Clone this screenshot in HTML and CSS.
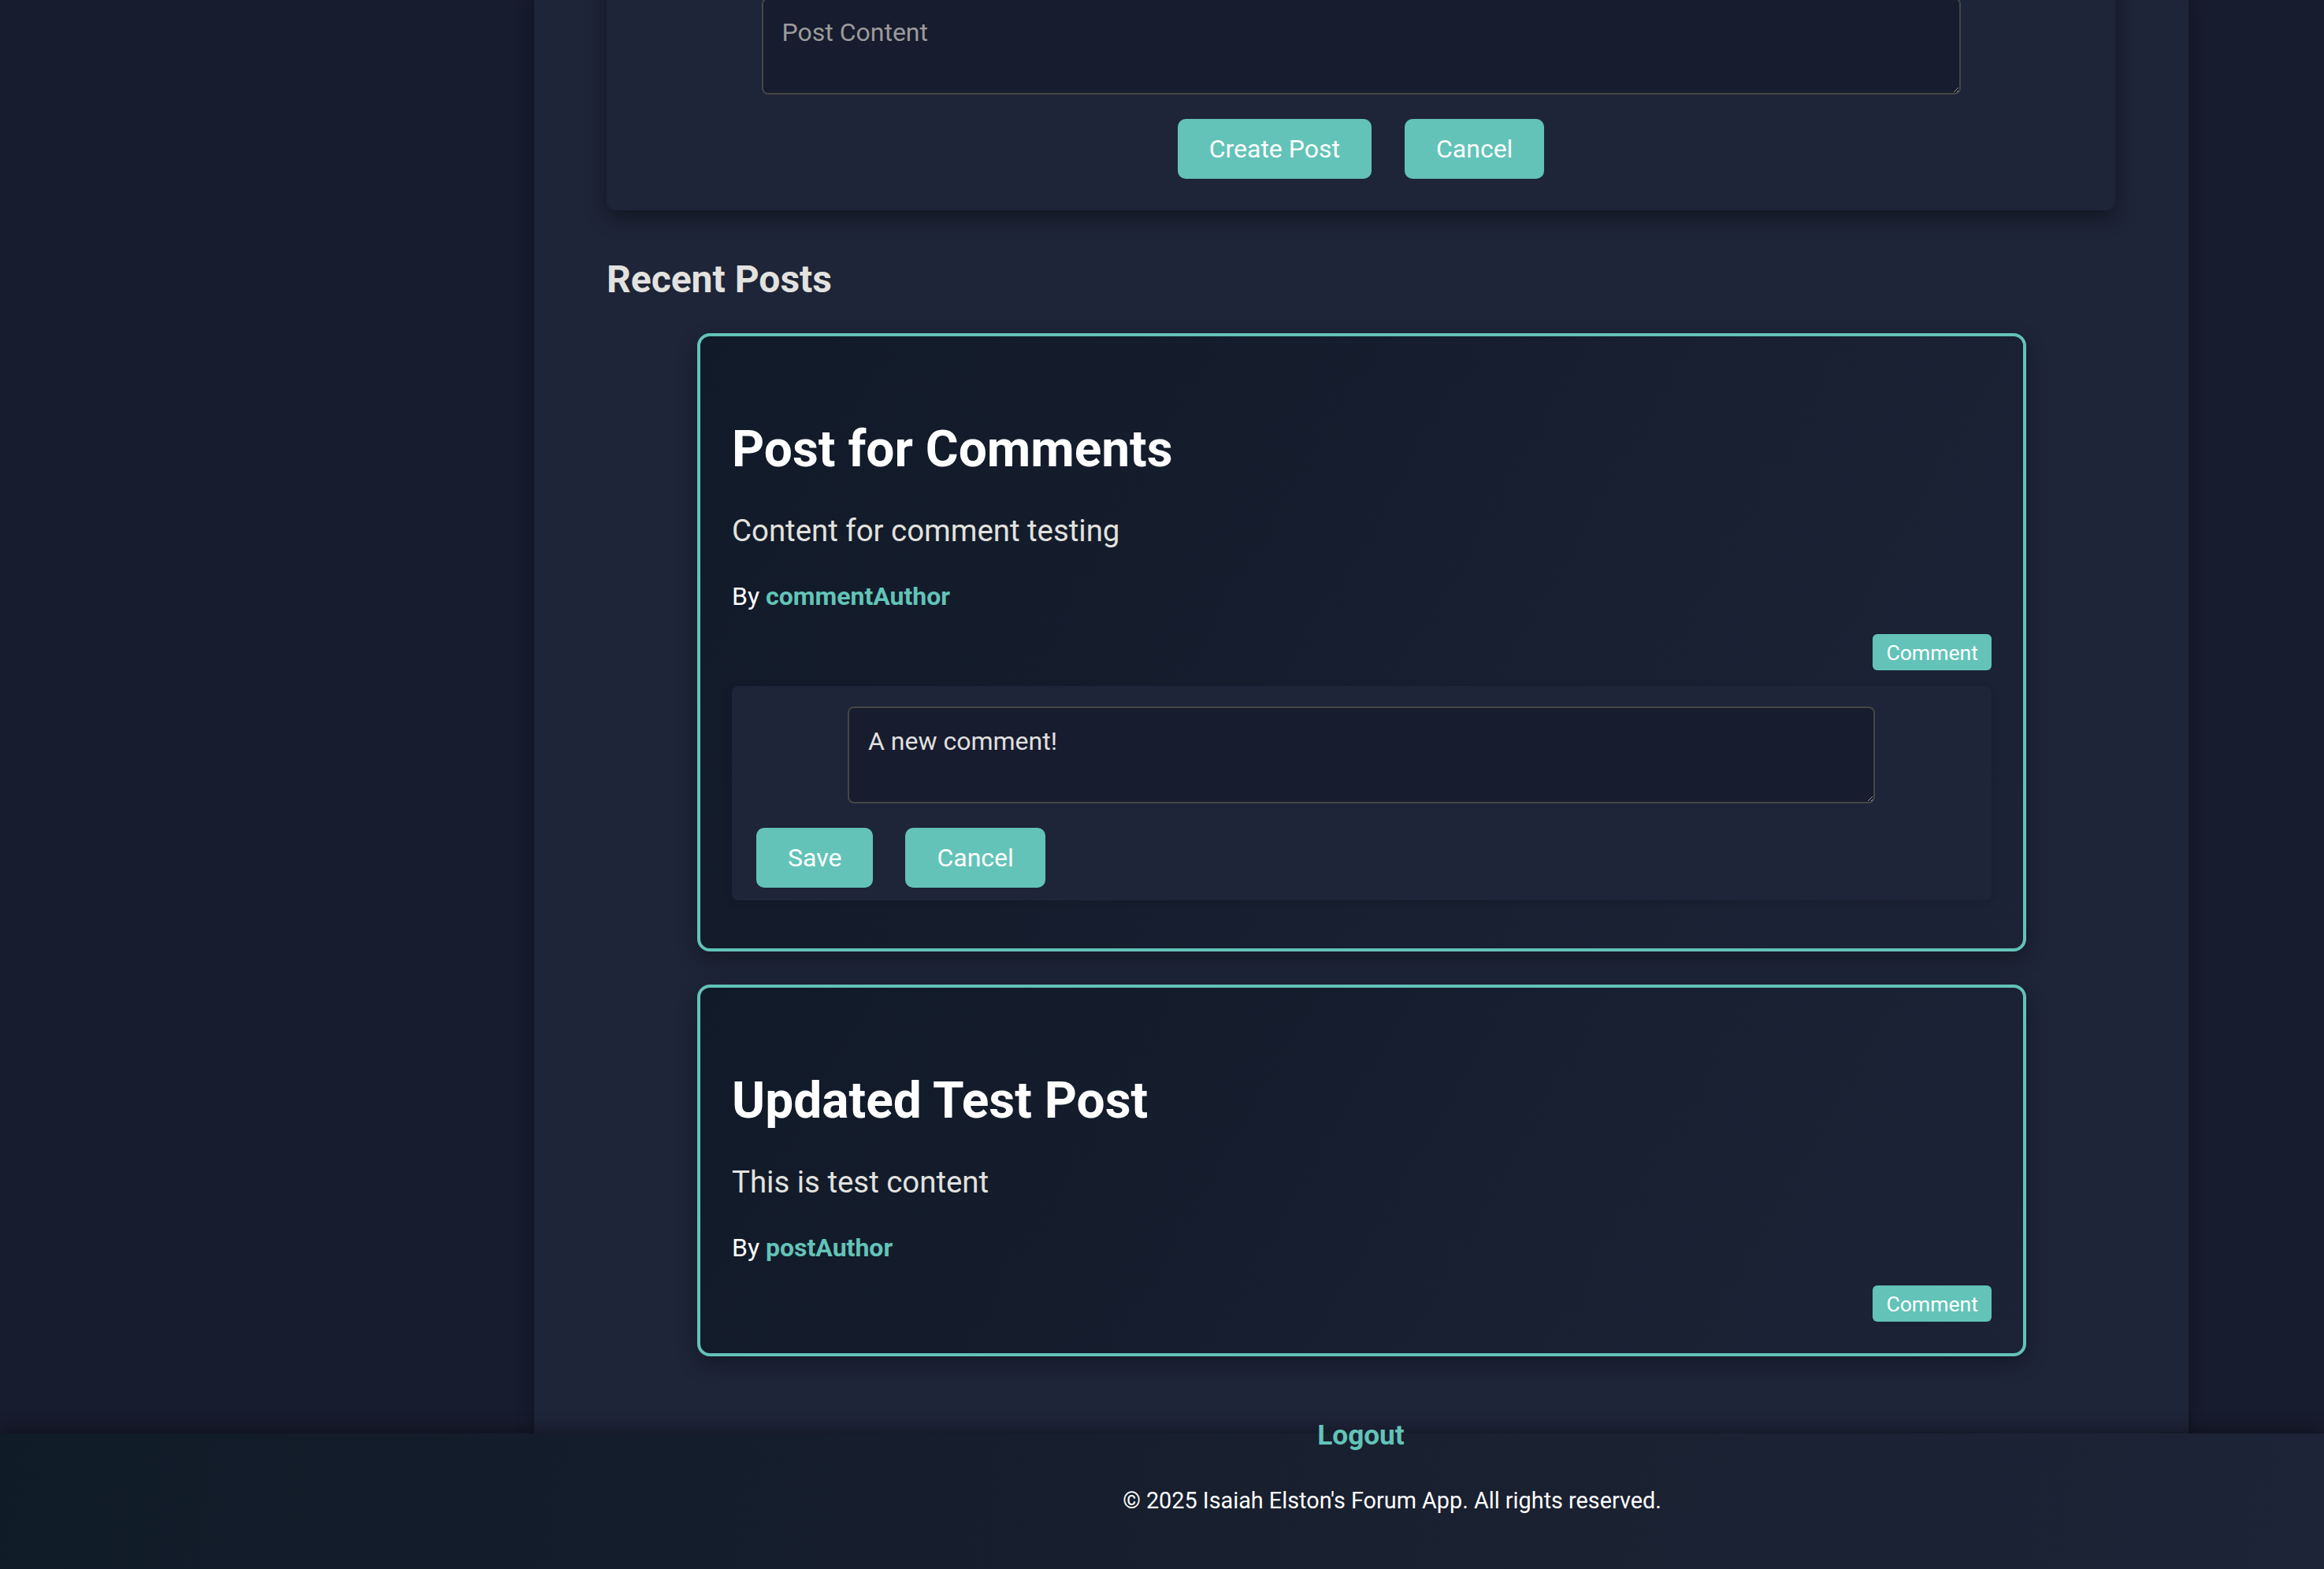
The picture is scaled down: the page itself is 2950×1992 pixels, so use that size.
FILE: index.html
```html
<!DOCTYPE html>
<html lang="en">
<head>
<meta charset="utf-8">
<title>Forum App</title>
<link rel="stylesheet" href="styles.css">
</head>
<body>
<main class="main">
  <section class="form-card">
    <textarea class="field field-post" placeholder="Post Content"></textarea>
    <div class="form-actions">
      <button class="btn">Create Post</button>
      <button class="btn">Cancel</button>
    </div>
  </section>

  <h2 class="section-title">Recent Posts</h2>

  <div class="posts">
    <article class="post-card">
      <h3 class="post-title">Post for Comments</h3>
      <p class="post-content">Content for comment testing</p>
      <p class="post-meta">By <a class="author" href="#">commentAuthor</a></p>
      <div class="comment-row"><button class="btn-small">Comment</button></div>
      <div class="comment-box">
        <textarea class="field field-comment">A new comment!</textarea>
        <div class="comment-actions">
          <button class="btn">Save</button>
          <button class="btn">Cancel</button>
        </div>
      </div>
    </article>

    <article class="post-card">
      <h3 class="post-title">Updated Test Post</h3>
      <p class="post-content">This is test content</p>
      <p class="post-meta">By <a class="author" href="#">postAuthor</a></p>
      <div class="comment-row"><button class="btn-small">Comment</button></div>
    </article>
  </div>

  <a class="logout" href="#">Logout</a>
</main>
<footer class="footer">
  <p class="copyright">© 2025 Isaiah Elston's Forum App. All rights reserved.</p>
</footer>
</body>
</html>
```
FILE: styles.css
```css
* { box-sizing: border-box; }

html, body {
  margin: 0;
  padding: 0;
}

body {
  background: #171c2e;
  font-family: Roboto, "Liberation Sans", sans-serif;
  color: #e0e0e0;
  overflow: hidden;
}

.main {
  display: flow-root;
  width: 2100px;
  height: 1820px;
  margin-left: 678px;
  padding: 0 93px 0 92px;
  background: #1e2538;
  box-shadow: 0 0 20px rgba(0, 0, 0, 0.35);
}

/* top form card (scrolled partially out of view) */
.form-card {
  margin-top: -43px;
  padding: 40px 0 40px;
  background: #1e2538;
  border-radius: 12px;
  box-shadow: 0 10px 26px rgba(0, 0, 0, 0.4);
}

.field {
  display: block;
  height: 123px;
  margin: 0 auto;
  padding: 24px;
  background: #171c2e;
  border: 2px solid #464646;
  border-radius: 8px;
  color: #e0e0e0;
  font-family: Roboto, "Liberation Sans", sans-serif;
  font-size: 32px;
  line-height: 37px;
}

.field::placeholder { color: #9b9b9b; }

.field-post { width: 1522px; }
.field-comment { width: 1304px; }

.form-actions {
  display: flex;
  justify-content: center;
  gap: 42px;
  margin-top: 31px;
}

.btn {
  height: 76px;
  padding: 0 40px;
  border: none;
  border-radius: 10px;
  background: #63c3b8;
  color: #ffffff;
  font-family: Roboto, "Liberation Sans", sans-serif;
  font-size: 32px;
  line-height: 36px;
}

.section-title {
  margin: 60px 0 40px;
  font-size: 48px;
  line-height: 56px;
  font-weight: 700;
  color: #e2e2df;
}

.posts {
  display: flex;
  flex-direction: column;
  gap: 42px;
  width: 1687px;
  margin-left: 115px;
}

.post-card {
  padding: 40px 40px 40px;
  border: 4px solid #63c3b8;
  border-radius: 16px;
  background: linear-gradient(120deg, #111a28 0%, #1c2336 100%);
  box-shadow: 0 10px 26px rgba(0, 0, 0, 0.3);
}

.post-title {
  margin: 66px 0 43px;
  font-size: 64px;
  line-height: 75px;
  font-weight: 700;
  color: #ffffff;
}

.post-content {
  margin: 0 0 42px;
  font-size: 38.4px;
  line-height: 45px;
  color: #e2e2df;
}

.post-meta {
  margin: 0;
  font-size: 32px;
  line-height: 38px;
  color: #ffffff;
  font-weight: 400;
}

.author {
  color: #63c3b8;
  font-weight: 700;
  text-decoration: none;
}

.comment-row {
  display: flex;
  justify-content: flex-end;
  margin-top: 29px;
}

.btn-small {
  height: 46px;
  padding: 0 17px;
  border: none;
  border-radius: 6px;
  background: #63c3b8;
  color: #ffffff;
  font-family: Roboto, "Liberation Sans", sans-serif;
  font-size: 26.6px;
  line-height: 31px;
}

.comment-box {
  margin: 20px 0 21px;
  padding: 26px 0 16px 31px;
  background: #1e2538;
  border-radius: 8px;
  box-shadow: 0 2px 10px rgba(0, 0, 0, 0.15);
}

.comment-box .field {
  margin-left: 116px;
}

.comment-actions {
  display: flex;
  gap: 41px;
  margin-top: 31px;
}

.logout {
  display: block;
  margin: 80px 0 0;
  text-align: center;
  font-size: 35.2px;
  line-height: 41px;
  font-weight: 700;
  color: #63c3b8;
  text-decoration: none;
}

.footer {
  height: 172px;
  padding: 69px 0 0 584px;
  background: linear-gradient(100deg, #101b28 0%, #19202f 60%, #1d2437 100%);
  box-shadow: 0 -6px 18px rgba(0, 0, 0, 0.35);
}

.copyright {
  margin: 0;
  text-align: center;
  font-size: 28.8px;
  line-height: 33px;
  color: #ffffff;
}
```
